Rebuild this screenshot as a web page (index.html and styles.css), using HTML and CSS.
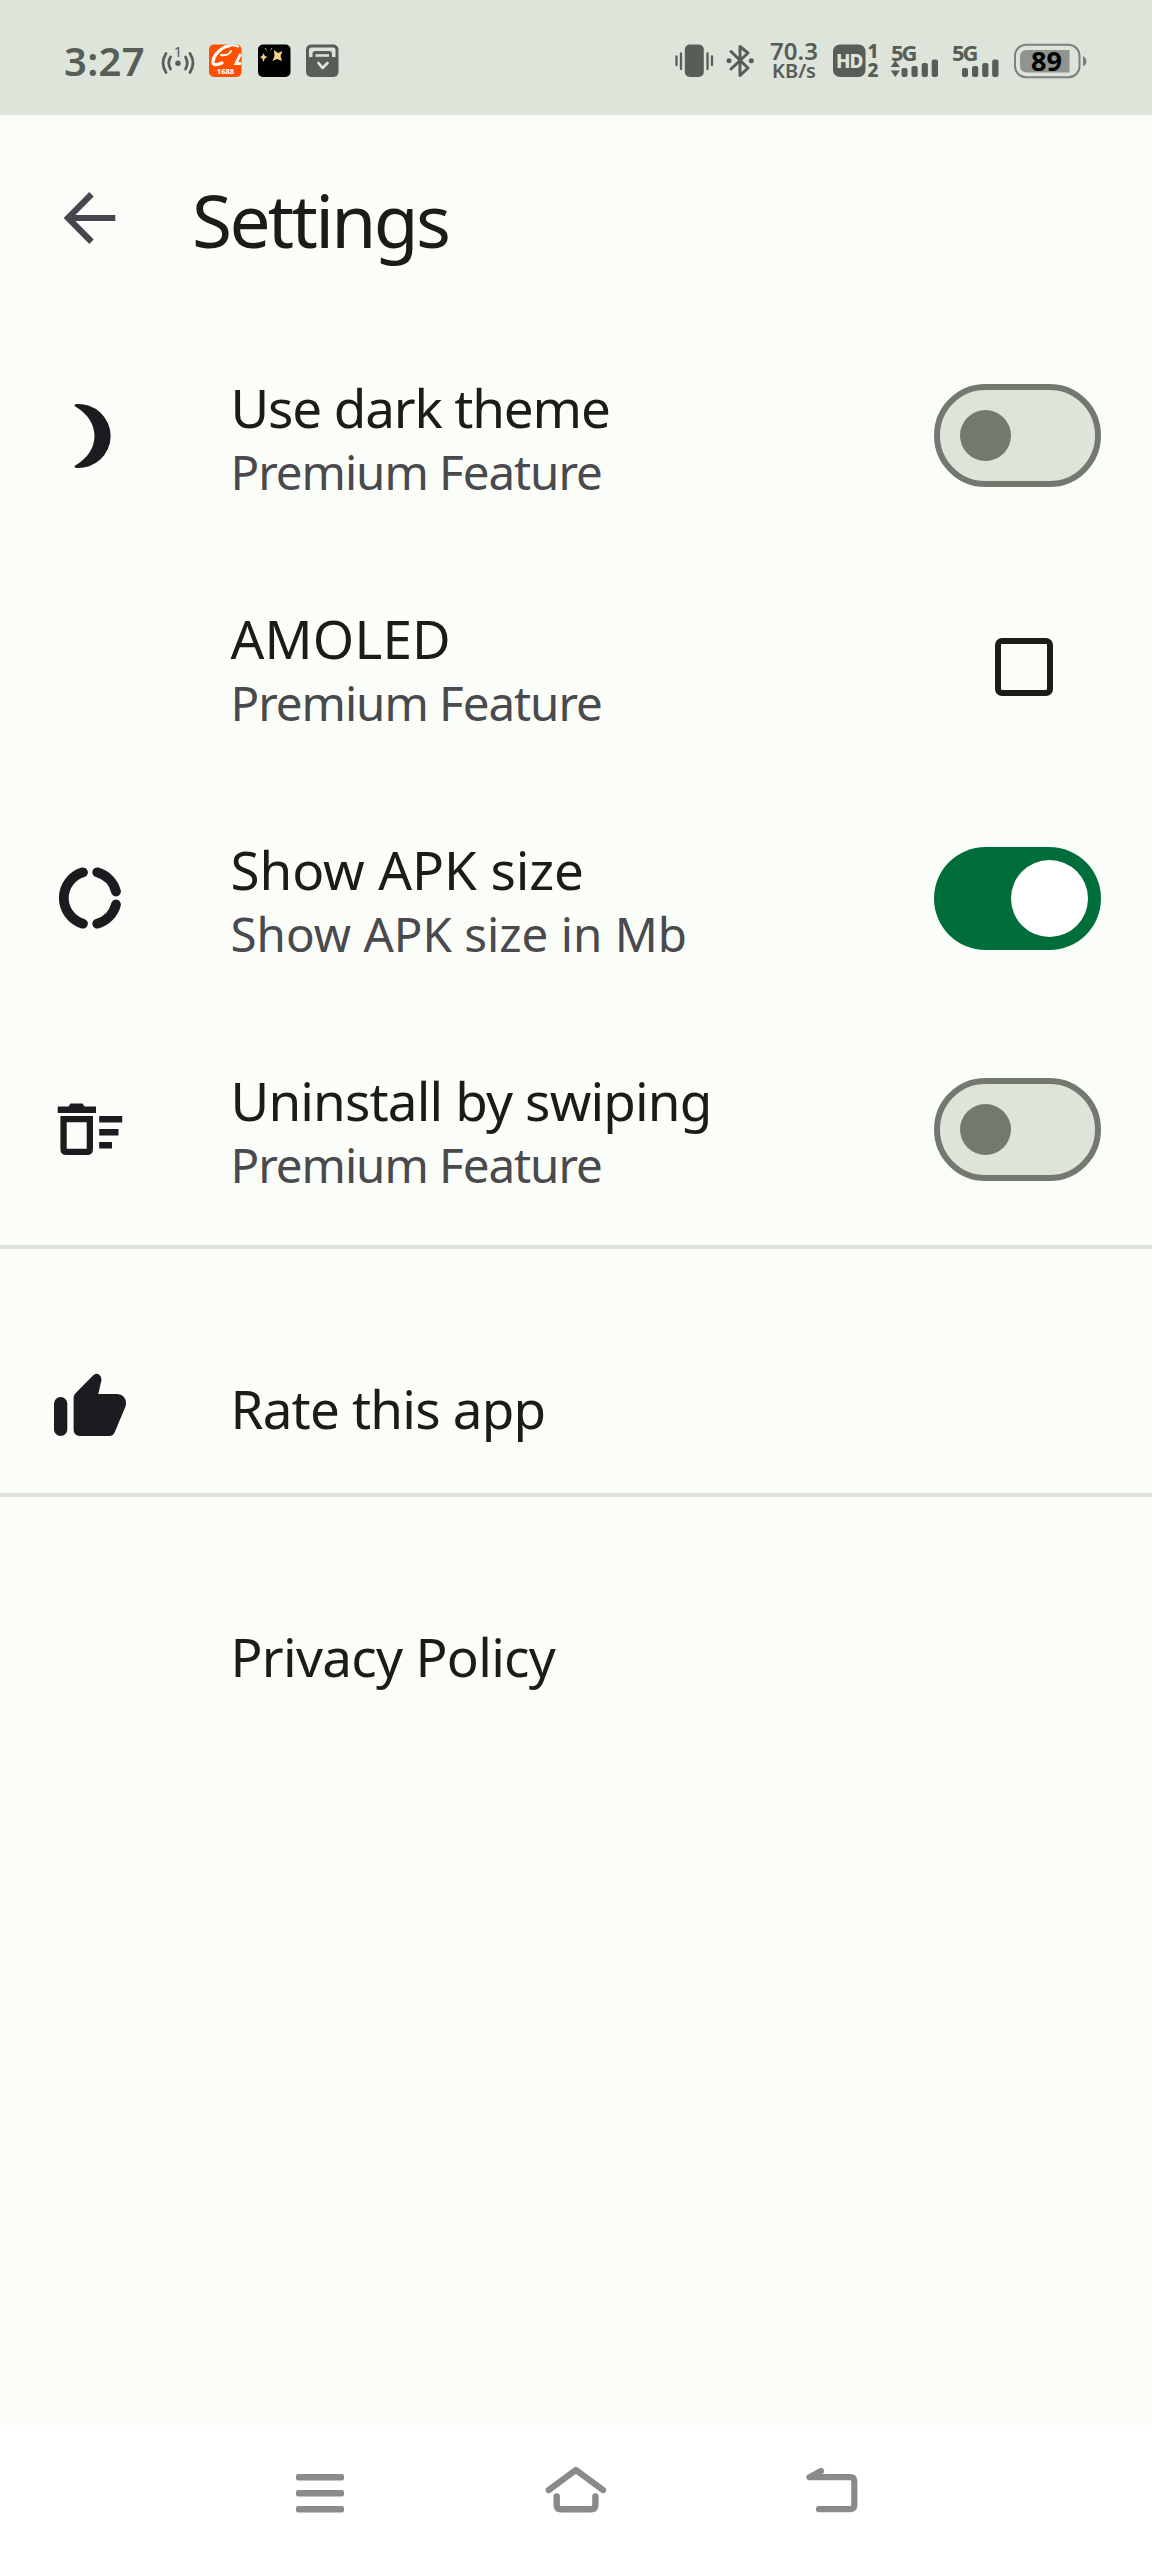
FILE: index.html
```html
<!DOCTYPE html>
<html lang="en">
<head>
<meta charset="utf-8">
<title>Settings</title>
<link rel="stylesheet" href="styles.css">
</head>
<body>
<div class="screen">
  <div class="status">
    <div class="status-left">
      <span class="clock">3:27</span>
      <svg class="s-hotspot" width="34" height="40" viewBox="0 0 34 40">
        <g fill="none" stroke="#575d57" stroke-width="2.7" stroke-linecap="round">
          <path d="M5 12.500Q-1 22 5 31.500M9.500 16Q6 22 9.500 28M29 12.500Q35 22 29 31.500M24.500 16Q28 22 24.500 28"/>
        </g>
        <circle cx="17" cy="22.300" r="2.700" fill="#575d57"/>
        <text x="17" y="16" class="hotspot-num">1</text>
      </svg>
      <svg class="s-shop" width="33" height="40" viewBox="0 0 33 40">
        <rect y="3.500" width="32.500" height="32.500" rx="5" fill="#ff5000"/>
        <g fill="none" stroke="#fff" stroke-linecap="round">
          <path d="M20 5C12 6 5 14 4 20C3 25 8 24 13 22" stroke-width="3.200"/>
          <path d="M15 6Q23 3 29 5.500" stroke-width="2"/>
          <path d="M12 14Q20 15 22 10" stroke-width="2"/>
          <path d="M31 14L27 22.500H31" stroke-width="2.800"/>
        </g>
        <text x="16.500" y="32.500" class="shop-label">1688</text>
      </svg>
      <svg class="s-spark" width="33" height="40" viewBox="0 0 33 40">
        <rect y="3.500" width="32.500" height="32.500" rx="5"/>
        <g fill="#f3d488">
          <path d="M16 9L20 12L24.500 10L22.500 15L24 20L19 18L14.500 20L16.500 15Z"/>
          <path d="M5.500 12L6.800 15L9.500 16L6.800 17.500L5.500 21L4.200 17.500L2 16L4.200 15Z"/>
          <path d="M6.500 7L8 7.500L9 10.500ZM14.500 6.500L13 7.500L12.500 10Z"/>
        </g>
      </svg>
      <svg class="s-bag" width="33" height="40" viewBox="0 0 33 40">
        <rect y="3.500" width="32.500" height="32.500" rx="5" fill="#575d57"/>
        <path d="M3 16V9Q3 6.500 5.500 6.500H27Q29.500 6.500 29.500 9V16H26V12.500Q26 10 23.500 10H9Q6.500 10 6.500 12.500V16Z" fill="#dde4da"/>
        <path d="M9.500 14.500H23" stroke="#dde4da" stroke-width="2.500"/>
        <path d="M12.500 22L16.500 27L21.500 22" fill="none" stroke="#dde4da" stroke-width="2.800" stroke-linecap="round" stroke-linejoin="round"/>
      </svg>
    </div>
    <div class="status-right">
      <svg class="s-vibrate" width="39" height="40" viewBox="0 0 39 40">
        <rect x="9.800" y="3.500" width="19" height="32.500" rx="5" fill="#575d57"/>
        <path d="M1.500 15.500V24M6 12.500V28M32.500 12.500V28M37 15.500V24" stroke="#575d57" stroke-width="2.300" stroke-linecap="round"/>
      </svg>
      <svg class="s-bt" width="28" height="40" viewBox="0 0 28 40">
        <path d="M5 10.500L22 27L14 34.500V5.500L22 12L5 28" fill="none" stroke="#575d57" stroke-width="3" stroke-linecap="round" stroke-linejoin="round"/>
        <circle cx="3" cy="19.800" r="2.500" fill="#575d57"/><circle cx="25.300" cy="19.800" r="2.500" fill="#575d57"/>
      </svg>
      <div class="speed"><span class="speed-value">70.3</span><span class="speed-unit">KB/s</span></div>
      <svg class="s-hd" width="46" height="40" viewBox="0 0 46 40">
        <rect y="3.500" width="32.500" height="32.500" rx="7" fill="#575d57"/>
        <text x="16.200" y="26.700" class="hd-label">HD</text>
        <text x="40" y="17" class="sim-num">1</text>
        <text x="40" y="35.500" class="sim-num">2</text>
      </svg>
      <svg class="s-sig1" width="48" height="40" viewBox="0 0 48 40">
        <text x="0" y="19.500" class="net">5G</text>
        <path d="M4.300 19.500L9 26H-.3ZM-.3 29.500H9L4.300 36Z" fill="#575d57"/>
        <g fill="#575d57"><rect x="10.500" y="27" width="6" height="9" rx="2"/><rect x="20.500" y="25" width="6.200" height="11" rx="2"/><rect x="30.700" y="22" width="6.200" height="14" rx="2"/><rect x="40.700" y="18.500" width="6.300" height="17.500" rx="2"/></g>
      </svg>
      <svg class="s-sig2" width="48" height="40" viewBox="0 0 48 40">
        <text x="-1" y="19.500" class="net">5G</text>
        <g fill="#575d57"><rect x="9" y="27" width="6" height="9" rx="2"/><rect x="19" y="25" width="6.200" height="11" rx="2"/><rect x="29.200" y="22" width="6.200" height="14" rx="2"/><rect x="39.200" y="18.500" width="6.300" height="17.500" rx="2"/></g>
      </svg>
      <svg class="s-batt" width="73" height="40" viewBox="0 0 73 40">
        <rect x="1" y="3.700" width="64.500" height="32.600" rx="11" fill="none" stroke="#7c827b" stroke-width="2"/>
        <path d="M13 9H55.500V31.500H13Q6 31.500 6 24.500V16Q6 9 13 9Z" fill="#8f948e"/>
        <path d="M69 15Q72.500 17 72.500 20Q72.500 23.500 69 25.500Z" fill="#7c827b"/>
        <text x="32.500" y="29.800" class="batt-num">89</text>
      </svg>
    </div>
  </div>

  <header class="topbar">
    <svg width="80" height="80" viewBox="0 0 80 80"><path d="M65.300 40H18.500M41.500 16.300L18 40L41.500 63.800" fill="none" stroke="#49454f" stroke-width="6.200"/></svg>
    <h1 class="heading">Settings</h1>
  </header>

  <main class="list">
    <div class="row">
      <svg class="icon" width="80" height="80" viewBox="0 0 80 80"><path d="M26 8A32.100 32.100 0 1 1 26 72Q23 70.500 26 69C38 62 44.500 51 44.500 40C44.500 29 38 18 26 11Q23 9.500 26 8Z" fill="#1c1b1f"/></svg>
      <div class="text"><div class="title t-dark">Use dark theme</div><div class="sub t-premium">Premium Feature</div></div>
      <div class="switch"><div class="knob"></div></div>
    </div>
    <div class="row">
      <div class="icon"></div>
      <div class="text"><div class="title t-amoled">AMOLED</div><div class="sub t-premium">Premium Feature</div></div>
      <div class="checkbox"></div>
    </div>
    <div class="row">
      <svg class="icon" width="80" height="80" viewBox="0 0 80 80"><path d="M33 14.300A26.800 26.800 0 0 0 33 65.700M47.200 14.300A26.800 26.800 0 0 1 66 33.500M66 46.500A26.800 26.800 0 0 1 47.200 65.700" fill="none" stroke="#1c1b1f" stroke-width="9.800" stroke-linecap="round"/></svg>
      <div class="text"><div class="title t-size">Show APK size</div><div class="sub">Show APK size in Mb</div></div>
      <div class="switch on"><div class="knob"></div></div>
    </div>
    <div class="row">
      <svg class="icon" width="80" height="80" viewBox="0 0 80 80"><g fill="#1c1b1f"><path d="M7.700 17.500H18.500L20.500 14.500H32.500L34.500 17.500H46V24H7.700Z"/><path fill-rule="evenodd" d="M10.400 27H43V60Q43 66 37 66H16.400Q10.400 66 10.400 60ZM16.700 33.300V59.700H36.700V33.300Z"/><path d="M49.200 27H72.200V33.500H49.200ZM49.200 40H68.500V46.500H49.200ZM49.200 53H62V59.500H49.200Z"/></g></svg>
      <div class="text"><div class="title t-swipe">Uninstall by swiping</div><div class="sub t-premium">Premium Feature</div></div>
      <div class="switch"><div class="knob"></div></div>
    </div>
    <div class="row single ruled">
      <svg class="icon" width="80" height="80" viewBox="0 0 80 80"><g fill="#1c1b1f"><rect x="4" y="32" width="13.300" height="39" rx="6.600"/><path d="M23.600 33Q23.600 30.500 25.300 28.500L43 10.500Q46 7.500 49.500 10Q52 12 51.500 15L48.300 29H67Q76 29.500 76 38.500Q76 40 75.300 42L64.800 67Q63.200 71 59.500 71H30Q23.600 71 23.600 64.500Z"/></g></svg>
      <div class="text"><div class="title t-rate">Rate this app</div></div>
    </div>
    <div class="row single ruled">
      <div class="icon"></div>
      <div class="text"><div class="title t-privacy">Privacy Policy</div></div>
    </div>
  </main>

  <nav class="nav">
    <svg width="80" height="61" viewBox="0 0 80 61"><g fill="#8a8a8a"><rect x="16" y="12" width="48" height="6.400" rx="2"/><rect x="16" y="28" width="48" height="6.400" rx="2"/><rect x="16" y="44" width="48" height="6.400" rx="2"/></g></svg>
    <svg width="80" height="61" viewBox="0 0 80 61"><path d="M12.800 28L39.900 8L67 28M20.700 34.500V43Q20.700 47.200 25 47.200H55Q59.400 47.200 59.400 43V34.500" fill="none" stroke="#8a8a8a" stroke-width="6.400" stroke-linecap="round" stroke-linejoin="round"/></svg>
    <svg width="80" height="61" viewBox="0 0 80 61"><path d="M29 9L17.500 15.200H58Q62.300 15.200 62.300 19.500V43Q62.300 47.200 58 47.200H27" fill="none" stroke="#8a8a8a" stroke-width="6.200" stroke-linecap="round" stroke-linejoin="round"/></svg>
  </nav>
</div>
</body>
</html>
```
FILE: styles.css
```css
* { box-sizing: border-box; }
body { margin: 0; font-family: "Noto Sans", sans-serif; color: #1a1c1a; }
.screen { width: 1152px; height: 2560px; display: flex; flex-direction: column; background: #fbfef8; }
svg { display: block; flex: none; overflow: visible; }

.status { height: 115px; padding: 7px 65px 0 64px; display: flex; justify-content: space-between; background: #dde4da; color: #575d57; }
.status-left, .status-right { display: flex; align-items: center; }
.clock { width: 97px; font-size: 40px; line-height: 40px; font-weight: 600; letter-spacing: 0.3px; }
.s-shop { margin-left: 14px; }
.s-spark { margin-left: 16px; }
.s-bag { margin-left: 15px; }
.s-bt { margin-left: 12px; }
.speed { width: 50px; margin-left: 15px; display: flex; flex-direction: column; align-items: center; font-weight: 600; }
.speed-value { font-size: 24px; line-height: 20px; }
.speed-unit { font-size: 20px; line-height: 20px; }
.s-hd { margin-left: 14px; }
.s-sig1 { margin-left: 12px; }
.s-sig2 { margin-left: 14px; }
.s-batt { margin-left: 13px; }
.hotspot-num { font-size: 15px; text-anchor: middle; fill: #575d57; }
.shop-label { font-size: 7.5px; font-weight: 800; text-anchor: middle; fill: #fff; }
.hd-label { font-size: 19px; font-weight: 800; text-anchor: middle; fill: #dde4da; letter-spacing: -1px; }
.sim-num { font-size: 19px; font-weight: 800; text-anchor: middle; fill: #575d57; }
.net { font-size: 22px; font-weight: 700; fill: #575d57; letter-spacing: -2px; }
.batt-num { font-size: 27px; font-weight: 700; text-anchor: middle; fill: #000; }

.topbar { height: 205px; padding: 0 50px 0; display: flex; align-items: center; }
.heading { margin: 4px 0 0 62px; font-size: 73px; line-height: 100px; font-weight: 400; letter-spacing: -2.7px; }

.list { flex: 1; }
.row { height: 231.25px; padding: 0 51px 0 50px; display: flex; align-items: center; }
.icon { width: 80px; height: 80px; flex: none; }
.text { flex: 1; margin-left: 100.5px; padding-top: 8px; white-space: nowrap; }
.title { font-size: 53px; line-height: 64px; }
.sub { font-size: 47.5px; line-height: 64px; color: #49494e; }
.t-dark { letter-spacing: -1.15px; }
.t-amoled { letter-spacing: 0.2px; }
.t-size { letter-spacing: -0.1px; }
.t-premium { letter-spacing: -1.05px; }
.t-swipe { letter-spacing: -0.85px; }
.t-rate { letter-spacing: -0.8px; }
.t-privacy { letter-spacing: -0.7px; }
.single { height: 248px; padding-top: 67px; }
.ruled { border-top: 4px solid #dce0db; }

.switch { width: 167px; height: 103px; padding: 0 20px; border: 6.4px solid #72796f; border-radius: 52px; display: flex; align-items: center; background: #dde4da; }
.knob { width: 51px; height: 51px; border-radius: 50%; background: #72796f; }
.on { justify-content: flex-end; padding: 0 13px; border: 0; background: #006e3a; }
.on .knob { width: 77px; height: 77px; background: #fff; }
.checkbox { width: 58px; height: 58px; margin-right: 48px; border: 6px solid #1a1c1a; border-radius: 7px; }

.nav { height: 135px; padding: 0 192px; display: grid; grid-template-columns: repeat(3, 256px); place-items: center; background: #fff; }
```
